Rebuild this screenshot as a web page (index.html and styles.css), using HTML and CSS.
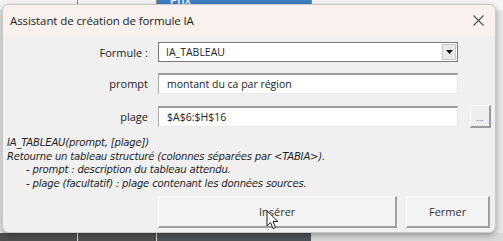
FILE: index.html
```html
<!DOCTYPE html>
<html lang="fr">
<head>
<meta charset="utf-8">
<link rel="stylesheet" href="styles.css">
</head>
<body>
<div class="sheet">
  <div class="top-row">
    <div class="cell c1"></div>
    <div class="cell c2"></div>
    <div class="cell head"></div>
    <div class="cell c4"></div>
  </div>
  <div class="mid"></div>
  <div class="bottom-row">
    <div class="bcell b1"></div>
    <div class="bcell b2"></div>
    <div class="bcell b3"></div>
    <div class="bcell b4"></div>
  </div>
</div>
<div class="prix">Prix</div>

<div class="dialog">
  <div class="titlebar">
    <span class="title">Assistant de création de formule IA</span>
    <svg class="close" width="11" height="11" viewBox="0 0 11 11"><path d="M0.5 0.5 L10.5 10.5 M10.5 0.5 L0.5 10.5" stroke="#555" stroke-width="1.2" fill="none"/></svg>
  </div>
  <div class="body">
    <div class="form">
      <label class="lbl">Formule :</label>
      <div class="select">
        <span class="val">IA_TABLEAU</span>
        <span class="dd"><svg width="7" height="4" viewBox="0 0 7 4"><path d="M0 0 H7 L3.5 4 Z" fill="#111"/></svg></span>
      </div>
      <span></span>

      <label class="lbl">prompt</label>
      <div class="input"><span class="val">montant du ca par région</span></div>
      <span></span>

      <label class="lbl">plage</label>
      <div class="input"><span class="val">$A$6:$H$16</span></div>
      <div class="dots">...</div>
    </div>
    <div class="desc">
      <div>IA_TABLEAU(prompt, [plage])</div>
      <div>Retourne un tableau structuré (colonnes séparées par &lt;TABIA&gt;).</div>
      <div class="ind">- prompt : description du tableau attendu.</div>
      <div class="ind">- plage (facultatif) : plage contenant les données sources.</div>
    </div>
    <div class="buttons">
      <div class="btn insert">Insérer</div>
      <div class="btn close-btn">Fermer</div>
    </div>
  </div>
  <svg class="cursor" width="14" height="20" viewBox="0 0 14 20"><path d="M1 1 L1 16 L4.5 12.5 L7 18.5 L9.5 17.5 L7 11.5 L12 11.5 Z" fill="#fff" stroke="#222" stroke-width="1"/></svg>
</div>
</body>
</html>
```

FILE: styles.css
```css
* { box-sizing: border-box; }
html, body { margin: 0; padding: 0; }
body {
  width: 503px;
  height: 241px;
  overflow: hidden;
  position: relative;
  background: #ececec;
  font-family: "Liberation Sans", Arial, sans-serif;
}
.sheet {
  display: flex;
  flex-direction: column;
  height: 241px;
}
.top-row {
  display: flex;
  height: 10px;
  background: #f7f7f7;
}
.cell { border-right: 1px solid #8a8a8a; height: 100%; }
.c1 { width: 78px; }
.c2 { width: 79px; }
.head {
  width: 155px;
  background: #3d7fc4;
}
.c4 { flex: 1; border-right: none; }
.prix {
  position: absolute;
  left: 170px;
  top: -6px;
  color: #e6eef8;
  font-size: 11px;
  font-weight: bold;
  line-height: 12px;
}
.mid { flex: 1; background: #e9e9e9; }
.bottom-row {
  display: flex;
  height: 8px;
}
.bcell { height: 100%; border-right: 1px solid #d8d8d8; background: #4f4f4f; }
.b1 { width: 78px; }
.b2 { width: 79px; }
.b3 { width: 155px; background: #505356; }
.b4 { flex: 1; background: #d9d9d9; border-right: none; }

.dialog {
  position: absolute;
  left: 2px;
  top: 4px;
  width: 494px;
  height: 229px;
  background: #f0f0f0;
  border: 1px solid #c9c9c9;
  border-radius: 7px;
  box-shadow: 0 2px 6px rgba(0,0,0,0.35);
  overflow: hidden;
  display: flex;
  flex-direction: column;
}
.titlebar {
  height: 31px;
  background: #f8f1ed;
  display: flex;
  align-items: center;
  justify-content: space-between;
  padding: 0 11px 0 7px;
  flex: none;
}
.title {
  font-family: "Open Sans", "Noto Sans", sans-serif;
  font-size: 11.5px;
  color: #222;
  letter-spacing: -0.1px;
}
.body {
  flex: 1;
  display: flex;
  flex-direction: column;
  padding: 6px 5px 4px 4px;
}
.form {
  display: grid;
  grid-template-columns: 141px 300px 21px;
  column-gap: 10px;
  row-gap: 11px;
  align-items: center;
}
.form > :nth-child(3n) { margin-left: 2px; }
.lbl {
  text-align: right;
  font-family: "Open Sans", "Noto Sans", sans-serif;
  font-size: 11px;
  color: #222;
}
.select {
  height: 20px;
  background: #fff;
  border: 1px solid #7a7a7a;
  display: flex;
  align-items: center;
  justify-content: space-between;
  padding: 0 1px 0 7px;
}
.input {
  height: 21px;
  background: #fff;
  border-top: 2px solid #9c9c9c;
  border-left: 1px solid #a8a8a8;
  border-right: 1px solid #e4e4e4;
  border-bottom: 1px solid #eaeaea;
  display: flex;
  align-items: center;
  padding: 0 8px;
}
.val {
  font-family: "Open Sans", "Noto Sans", sans-serif;
  font-size: 10.5px;
  color: #222;
}
.dd {
  width: 14px;
  height: 16px;
  background: #e9e9e9;
  border: 1px solid #c8c8c8;
  display: flex;
  align-items: center;
  justify-content: center;
}
.dots {
  width: 21px;
  height: 23px;
  background: #eeeeee;
  border-top: 1px solid #fafafa;
  border-left: 1px solid #fafafa;
  border-right: 2px solid #9a9a9a;
  border-bottom: 2px solid #9a9a9a;
  font-size: 9px;
  color: #666;
  display: flex;
  align-items: flex-end;
  justify-content: center;
  padding-bottom: 3px;
}
.desc {
  margin-top: 8px;
  font-family: "DejaVu Sans", Verdana, sans-serif;
  font-style: italic;
  font-size: 10.1px;
  line-height: 13.7px;
  color: #1e1e1e;
  letter-spacing: -0.2px;
}
.desc .ind { padding-left: 19px; }
.buttons {
  margin-top: auto;
  display: flex;
  gap: 9px;
  padding-left: 151px;
}
.btn {
  height: 32px;
  display: flex;
  align-items: center;
  justify-content: center;
  background: #f3f3f3;
  border-top: 1px solid #fdfdfd;
  border-left: 1px solid #fdfdfd;
  border-right: 2px solid #a0a0a0;
  border-bottom: 2px solid #a0a0a0;
  font-family: "Open Sans", "Noto Sans", sans-serif;
  font-size: 11px;
  color: #333;
}
.insert { width: 240px; }
.close-btn { width: 84px; }
.cursor {
  position: absolute;
  left: 263px;
  top: 205px;
}
```
